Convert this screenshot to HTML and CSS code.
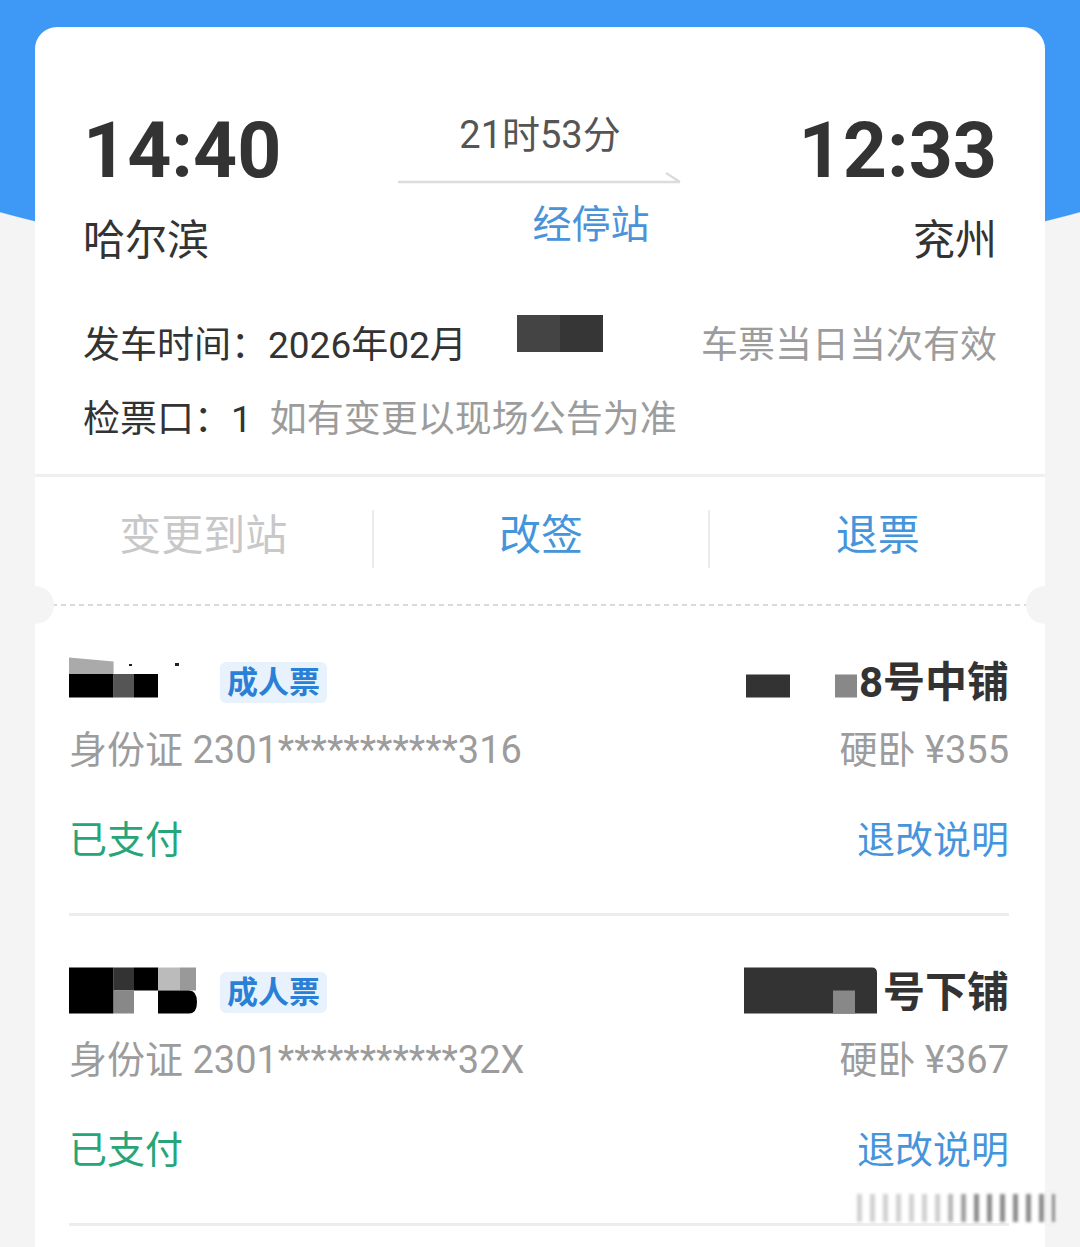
FILE: index.html
```html
<!DOCTYPE html>
<html lang="zh-CN">
<head>
    <meta charset="UTF-8">
    <meta name="viewport" content="width=device-width, initial-scale=1.0">
    <title>订单详情</title>
    <link rel="stylesheet" href="styles.css">
</head>
<body>
    <div class="card">
        <div class="journey">
            <div class="station">
                <div class="time">14:40</div>
                <div class="city">哈尔滨</div>
            </div>
            <div class="middle">
                <div class="duration">21时53分</div>
                <svg class="arrow" width="284" height="14" viewBox="0 0 284 14">
                    <path d="M0 11 H282 M268 2 L282 11" fill="none" stroke="#dcdcdc" stroke-width="2.5"/>
                </svg>
                <div class="stops"><span class="hidden-no"></span>经停站</div>
            </div>
            <div class="station right">
                <div class="time">12:33</div>
                <div class="city">兖州</div>
            </div>
        </div>

        <div class="info">
            <div class="info-row">
                <div class="depart">
                    <span>发车时间：2026年02月</span>
                    <span class="mask-date"></span>
                </div>
                <span class="muted">车票当日当次有效</span>
            </div>
            <div class="info-row">
                <div><span>检票口：1</span><span class="muted notice">如有变更以现场公告为准</span></div>
            </div>
        </div>

        <div class="actions">
            <div class="action disabled">变更到站</div>
            <div class="action">改签</div>
            <div class="action">退票</div>
        </div>

        <div class="tear"></div>

        <div class="passenger">
            <div class="p-head">
                <div class="p-name">
                    <svg width="151" height="52" viewBox="0 0 151 52">
                        <path d="M0 0.5 L44.6 4.5 V17 H0 Z" fill="#aaa"/>
                        <rect x="0" y="17" width="44.6" height="23.5" fill="#000"/>
                        <rect x="44.6" y="17" width="20.4" height="23.5" fill="#555"/>
                        <rect x="65" y="17" width="24" height="23.5" fill="#000"/>
                        <rect x="60" y="7" width="3" height="2" fill="#222"/>
                        <rect x="106" y="6" width="4" height="3" fill="#222"/>
                    </svg>
                    <span class="badge">成人票</span>
                </div>
                <div class="seat">
                    <svg width="113" height="52" viewBox="0 0 113 52">
                        <rect x="0" y="17.5" width="44" height="23" fill="#333"/>
                        <rect x="89" y="17.5" width="22" height="23" fill="#888"/>
                    </svg>
                    <span>8号中铺</span>
                </div>
            </div>
            <div class="p-row muted">
                <span>身份证 2301***********316</span>
                <span>硬卧 ¥355</span>
            </div>
            <div class="p-row p-status">
                <span class="paid">已支付</span>
                <span class="link">退改说明</span>
            </div>
        </div>

        <div class="passenger">
            <div class="p-head">
                <div class="p-name">
                    <svg width="151" height="52" viewBox="0 0 151 52">
                        <rect x="0" y="0.5" width="44.6" height="46" fill="#000"/>
                        <rect x="44.6" y="0.5" width="20.4" height="23" fill="#333"/>
                        <rect x="65" y="0.5" width="24" height="23" fill="#000"/>
                        <rect x="89" y="0.5" width="22" height="23" fill="#bbb"/>
                        <rect x="111" y="0.5" width="16" height="23" fill="#999"/>
                        <rect x="44.6" y="23.5" width="20.4" height="23" fill="#888"/>
                        <path d="M89 23.5 H120 Q128 23.5 128 35 Q128 46.5 120 46.5 H89 Z" fill="#000"/>
                    </svg>
                    <span class="badge">成人票</span>
                </div>
                <div class="seat">
                    <svg width="139" height="52" viewBox="0 0 139 52">
                        <path d="M0 0.5 H128 Q133 0.5 133 6 V46.5 H0 Z" fill="#333"/>
                        <rect x="89" y="23.5" width="22" height="23" fill="#888"/>
                    </svg>
                    <span>号下铺</span>
                </div>
            </div>
            <div class="p-row muted">
                <span>身份证 2301***********32X</span>
                <span>硬卧 ¥367</span>
            </div>
            <div class="p-row p-status">
                <span class="paid">已支付</span>
                <span class="link">退改说明</span>
            </div>
        </div>
    </div>

    <div class="watermark"></div>
</body>
</html>
```

FILE: styles.css
```css
html, body {
    margin: 0;
    padding: 0;
}
body {
    position: relative;
    height: 1247px;
    overflow: hidden;
    font-family: Roboto, "Noto Sans CJK SC", sans-serif;
    color: #333;
    background:
        radial-gradient(756px 204px at 50% 70px, #3e98f6 99.6%, rgba(62, 152, 246, 0) 100%) no-repeat,
        linear-gradient(#3e98f6, #3e98f6) 0 0 / 100% 70px no-repeat,
        #f4f4f4;
}
.card {
    position: relative;
    margin: 27px 35px 0;
    min-height: 1300px;
    background: #fff;
    border-radius: 22px 22px 0 0;
}

/* journey */
.journey {
    display: grid;
    grid-template-columns: 1fr 284px 1fr;
    padding: 84px 48px 0;
}
.time {
    font-size: 77px;
    line-height: 80px;
    font-weight: 700;
    color: #333;
}
.city {
    margin-top: 29px;
    font-size: 42px;
    line-height: 42px;
}
.station.right {
    text-align: right;
}
.middle {
    display: flex;
    flex-direction: column;
    align-items: center;
}
.duration {
    margin-top: 5px;
    font-size: 38px;
    line-height: 38px;
    color: #555;
}
.arrow {
    display: block;
    margin-top: 17px;
}
.stops {
    margin-top: 20px;
    font-size: 39px;
    line-height: 40px;
    color: #4a93d8;
    white-space: nowrap;
}
.hidden-no {
    display: inline-block;
    width: 102px;
}

/* info */
.info {
    margin-top: 47px;
    padding: 0 48px 17px;
    border-bottom: 3px solid #efefef;
}
.info-row {
    display: flex;
    justify-content: space-between;
    font-size: 37px;
    line-height: 74px;
    white-space: nowrap;
}
.depart {
    display: flex;
    align-items: flex-start;
}
.mask-date {
    display: block;
    width: 86px;
    height: 37px;
    margin: 6px 0 0 50px;
    background: linear-gradient(90deg, #444 0 50%, #363636 50%);
}
.muted {
    color: #9c9c9c;
}
.notice {
    margin-left: 18px;
}

/* actions */
.actions {
    display: grid;
    grid-template-columns: 1fr 1fr 1fr;
    margin-top: 33px;
}
.action {
    height: 58px;
    font-size: 42px;
    line-height: 52px;
    text-align: center;
    color: #4595dc;
}
.action + .action {
    border-left: 2px solid #ebebeb;
}
.action.disabled {
    color: #c8c8c8;
}

/* tear line */
.tear {
    position: relative;
    height: 2px;
    margin: 36px 17px 0;
    background: repeating-linear-gradient(90deg, #dadada 0 5px, transparent 5px 9px);
}
.tear::before,
.tear::after {
    content: "";
    position: absolute;
    top: -18px;
    width: 38px;
    height: 38px;
    border-radius: 50%;
    background: #f4f4f4;
}
.tear::before {
    left: -36px;
}
.tear::after {
    right: -36px;
}

/* passengers */
.passenger {
    margin: 0 36px 0 34px;
    padding-top: 56px;
    padding-bottom: 48px;
    border-bottom: 3px solid #ededed;
}
.p-head {
    display: flex;
    justify-content: space-between;
    align-items: center;
    height: 41px;
}
.p-name,
.seat {
    display: flex;
    align-items: center;
}
.p-name svg,
.seat svg {
    display: block;
}
.badge {
    padding: 0 7px;
    font-size: 31px;
    line-height: 41px;
    font-weight: 700;
    color: #2a7fd6;
    background: #e8f2fd;
    border-radius: 6px;
}
.seat span {
    font-size: 42px;
    line-height: 41px;
    font-weight: 700;
    color: #333;
}
.p-row {
    display: flex;
    justify-content: space-between;
    margin-top: 22px;
    font-size: 38px;
    line-height: 50px;
    white-space: nowrap;
}
.p-status {
    margin-top: 40px;
}
.paid {
    color: #25a578;
}
.link {
    color: #4595dc;
}

.watermark {
    position: absolute;
    left: 857px;
    top: 1194px;
    width: 198px;
    height: 28px;
    filter: blur(1.5px);
    opacity: 0.75;
    background:
        linear-gradient(90deg, rgba(255, 255, 255, 0.6) 0 40%, rgba(255, 255, 255, 0) 60%),
        repeating-linear-gradient(90deg, #666 0 5px, transparent 5px 13px);
}
```
